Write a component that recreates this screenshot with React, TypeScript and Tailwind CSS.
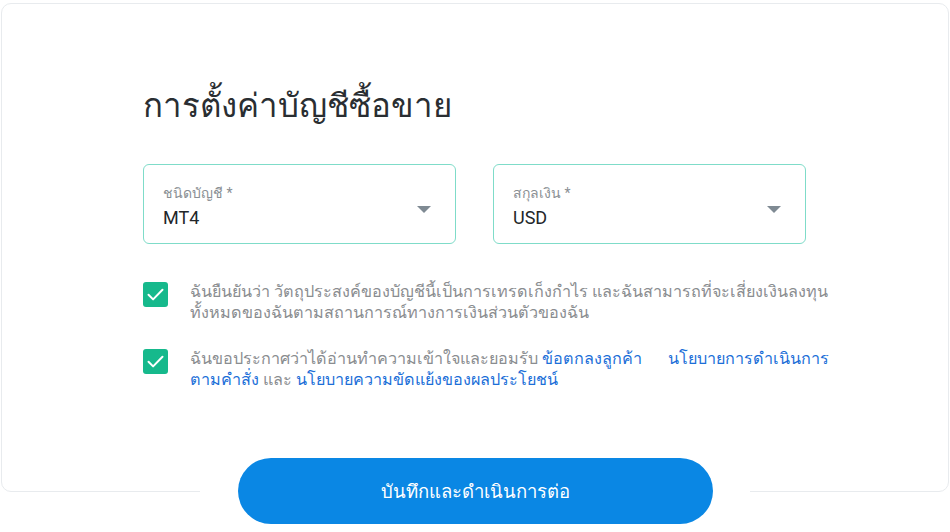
function SelectField({ label, value }: { label: string; value: string }) {
  return (
    <div className="relative w-[313px] h-[80px] rounded-[6px] border border-[#7fdcc9] bg-white px-[19px] pt-[18px]">
      <div className="text-[14px] leading-[20px] text-[#8a8f94]">{label}</div>
      <div className="text-[18px] leading-[24px] text-[#222629] mt-[3px]">{value}</div>
      <svg className="absolute right-[24px] top-[41px]" width="14" height="7" viewBox="0 0 14 7">
        <path d="M0 0h14L7 7z" fill="#7f8a93" />
      </svg>
    </div>
  )
}

function Check() {
  return (
    <div className="w-[25px] h-[25px] shrink-0 rounded-[3px] bg-[#16b98c] flex items-center justify-center">
      <svg width="17" height="13" viewBox="0 0 17 13" fill="none">
        <path d="M1.5 6.8l4.6 4.6L15.5 1.8" stroke="#fff" strokeWidth="2" strokeLinecap="round" strokeLinejoin="round" />
      </svg>
    </div>
  )
}

export default function App() {
  return (
    <div className="w-[950px] h-[532px] bg-white overflow-hidden" style={{ fontFamily: 'Roboto, "Noto Sans", "DejaVu Sans", sans-serif' }}>
      {/* Account settings card */}
      <div className="ml-[1px] mt-[3px] w-[948px] h-[489px] rounded-[10px] border border-[#e8ebee] bg-white">
        <div className="pl-[141px] pt-[78px]">
          <h1 className="text-[33px] leading-[48px] text-[#2a2e32] font-normal">การตั้งค่าบัญชีซื้อขาย</h1>

          <div className="flex gap-[37px] mt-[34px]">
            <SelectField label="ชนิดบัญชี *" value="MT4" />
            <SelectField label="สกุลเงิน *" value="USD" />
          </div>

          <div className="mt-[38px] space-y-[26px]">
            <div className="flex gap-[22px]">
              <Check />
              <p className="text-[16.2px] leading-[21px] text-[#8a8d90] -mt-[1px]">
                ฉันยืนยันว่า วัตถุประสงค์ของบัญชีนี้เป็นการเทรดเก็งกำไร และฉันสามารถที่จะเสี่ยงเงินลงทุน
                <br />
                ทั้งหมดของฉันตามสถานการณ์ทางการเงินส่วนตัวของฉัน
              </p>
            </div>
            <div className="flex gap-[22px]">
              <Check />
              <p className="text-[16.2px] leading-[21px] text-[#8a8d90] -mt-[1px]">
                ฉันขอประกาศว่าได้อ่านทำความเข้าใจและยอมรับ{' '}
                <a className="text-[#1c6fd8]">ข้อตกลงลูกค้า</a>
                <span className="inline-block w-[26px]" />
                <a className="text-[#1c6fd8]">นโยบายการดำเนินการ</a>
                <br />
                <a className="text-[#1c6fd8]">ตามคำสั่ง</a> และ{' '}
                <a className="text-[#1c6fd8]">นโยบายความขัดแย้งของผลประโยชน์</a>
              </p>
            </div>
          </div>
        </div>
      </div>

      {/* Sticky footer */}
      <div className="relative -mt-[34px] mx-auto w-[550px] h-[80px] bg-white flex justify-center">
        <button className="w-[475px] h-[66px] rounded-full bg-[#0a87e4] text-white text-[18.5px] font-medium pt-[3px]">
          บันทึกและดำเนินการต่อ
        </button>
      </div>
    </div>
  )
}
